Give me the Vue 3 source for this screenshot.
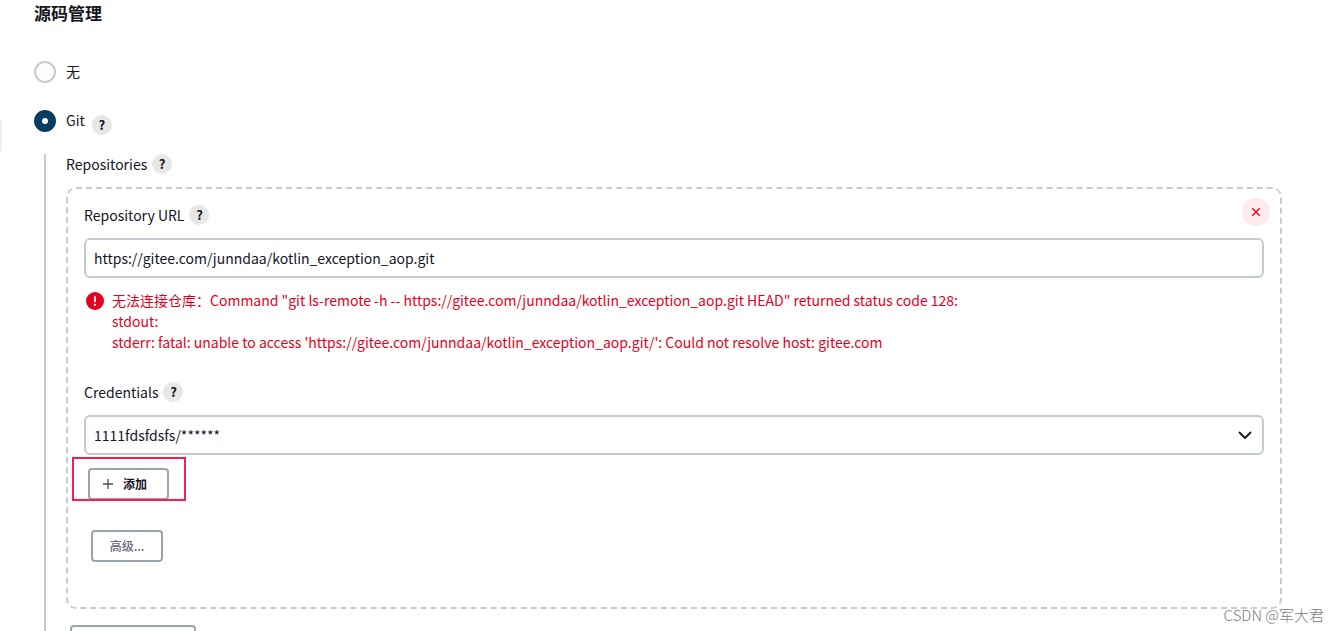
<script setup>
import { ref } from 'vue'

const scm = ref('git')
const url = ref('https://gitee.com/junndaa/kotlin_exception_aop.git')
const credential = ref('1111fdsfdsfs/******')
</script>

<template>
  <main class="page">
    <span class="side-handle"></span>
    <h2 class="title">源码管理</h2>

    <div class="choice none">
      <input id="scm-none" v-model="scm" type="radio" name="scm" value="none" />
      <label for="scm-none">无</label>
    </div>
    <div class="choice git">
      <input id="scm-git" v-model="scm" type="radio" name="scm" value="git" />
      <label for="scm-git">Git</label>
      <button class="help low" type="button">?</button>
    </div>

    <section class="nested">
      <div class="label-row">
        <span>Repositories</span>
        <button class="help" type="button">?</button>
      </div>

      <div class="repo">
        <button class="remove" type="button" aria-label="Remove">
          <svg width="10" height="10" viewBox="0 0 10 10">
            <path d="M1.3 1.3 8.7 8.7M8.7 1.3 1.3 8.7" stroke="#e6001f" stroke-width="1.4" fill="none" />
          </svg>
        </button>

        <div class="label-row">
          <label for="repo-url">Repository URL</label>
          <button class="help" type="button">?</button>
        </div>
        <input id="repo-url" v-model="url" class="field" type="text" spellcheck="false" />

        <div class="error">
          <svg class="error-icon" width="18" height="18" viewBox="0 0 18 18">
            <circle cx="9" cy="9" r="9" fill="#e6001f" />
            <path d="M9 4.8V9.4" stroke="#fff" stroke-width="1.8" stroke-linecap="round" />
            <circle cx="9" cy="12.8" r="1.1" fill="#fff" />
          </svg>
          <div>
            无法连接仓库：Command "git ls-remote -h -- https://gitee.com/junndaa/kotlin_exception_aop.git HEAD" returned status code 128:<br />
            stdout:<br />
            stderr: fatal: unable to access 'https://gitee.com/junndaa/kotlin_exception_aop.git/': Could not resolve host: gitee.com
          </div>
        </div>

        <div class="label-row">
          <label for="credentials">Credentials</label>
          <button class="help" type="button">?</button>
        </div>
        <div class="select-wrap">
          <select id="credentials" v-model="credential" class="field">
            <option>1111fdsfdsfs/******</option>
          </select>
          <svg class="chevron" width="14" height="9" viewBox="0 0 14 9">
            <path d="M1.5 1.5 7 7 12.5 1.5" fill="none" stroke="#14141f" stroke-width="1.8" stroke-linecap="round" stroke-linejoin="round" />
          </svg>
        </div>

        <div class="actions">
          <button class="btn add" type="button">
            <svg width="12" height="12" viewBox="0 0 12 12">
              <path d="M6 1V11M1 6H11" stroke="#4d4d57" stroke-width="1.3" />
            </svg>
            <span>添加</span>
          </button>
          <span class="highlight"></span>
        </div>
        <button class="btn advanced" type="button">高级...</button>
      </div>

      <button class="btn add-repo" type="button" aria-label="Add Repository"></button>
    </section>

    <span class="watermark">CSDN @军大君</span>
  </main>
</template>

<style>
html,
body {
  overflow: hidden;
}
</style>

<style scoped>
.page {
  position: relative;
  height: 100vh;
  overflow: hidden;
  box-sizing: border-box;
  padding: 0 58px 0 34px;
  background: #fff;
  color: #14141f;
  font: 14px/20px "Noto Sans CJK SC", sans-serif;
}

.page *,
.page *::before {
  box-sizing: border-box;
}

button,
input,
select {
  margin: 0;
  font: inherit;
  color: inherit;
}

.side-handle {
  position: absolute;
  left: 0;
  top: 119px;
  width: 2px;
  height: 32px;
  border-radius: 0 2px 2px 0;
  background: #efeff4;
}

.title {
  margin: 0;
  font-size: 17px;
  line-height: 26px;
  font-weight: 700;
}

.choice {
  display: flex;
  align-items: flex-start;
  height: 22px;
}

.choice.none {
  margin-top: 35px;
}

.choice.git {
  margin-top: 27px;
}

.choice input {
  appearance: none;
  width: 22px;
  height: 22px;
  margin-right: 10px;
  border: 2px solid #c3cdd1;
  border-radius: 50%;
  background: #fff;
}

.choice input:checked {
  border: 8px solid #063e62;
}

.help {
  display: inline-flex;
  align-items: center;
  justify-content: center;
  width: 20px;
  height: 20px;
  margin-left: 5px;
  padding: 0;
  border: 0;
  border-radius: 50%;
  background: #e7e7e7;
  font-size: 13px;
  line-height: 20px;
  font-weight: 700;
}

.help.low {
  align-self: flex-end;
  margin: 0 0 -3px 7px;
}

.nested {
  margin: 22px 0 0 10px;
  padding-left: 20px;
  border-left: 2px solid #c3cdd1;
}

.label-row {
  display: flex;
  align-items: center;
  height: 20px;
}

.repo {
  position: relative;
  margin-top: 13px;
  padding: 16px;
  height: 422px;
  border: 2px dashed #c3cdd1;
  border-radius: 10px;
}

.remove {
  position: absolute;
  top: 9px;
  right: 10px;
  display: flex;
  align-items: center;
  justify-content: center;
  width: 28px;
  height: 28px;
  padding: 0;
  border: 0;
  border-radius: 50%;
  background: #fdebed;
}

.field {
  display: block;
  appearance: none;
  width: 100%;
  height: 40px;
  margin-top: 13px;
  padding: 0 8px;
  border: 2px solid #c3cdd1;
  border-radius: 6px;
  background: #fff;
}

.error {
  display: flex;
  gap: 8px;
  margin: 12px 0 29px;
  padding-left: 2px;
  color: #e6001f;
  line-height: 21px;
}

.error-icon {
  flex: none;
  margin-top: 2px;
}

.select-wrap {
  position: relative;
}

.chevron {
  position: absolute;
  right: 12px;
  top: 16px;
  pointer-events: none;
}

.actions {
  position: relative;
  margin-top: 13px;
  padding-left: 4px;
}

.btn {
  display: flex;
  align-items: center;
  justify-content: center;
  height: 32px;
  border: 2px solid #98a5ae;
  border-radius: 4px;
  background: #fff;
  font-size: 12px;
  font-weight: 700;
}

.add {
  gap: 9px;
  padding: 0 20px 0 12px;
}

.highlight {
  position: absolute;
  left: -12px;
  top: -11px;
  width: 114px;
  height: 44px;
  border: 2px solid #fb1e4b;
  pointer-events: none;
}

.advanced {
  min-width: 72px;
  margin: 30px 0 0 7px;
  padding: 0 16px;
  color: #6b6880;
  font-weight: 500;
}

.add-repo {
  min-width: 126px;
  margin: 16px 0 0 4px;
}

.watermark {
  position: absolute;
  right: 16px;
  bottom: 6px;
  color: #808080;
  font: 300 15px/20px "Noto Sans CJK SC", sans-serif;
}
</style>
